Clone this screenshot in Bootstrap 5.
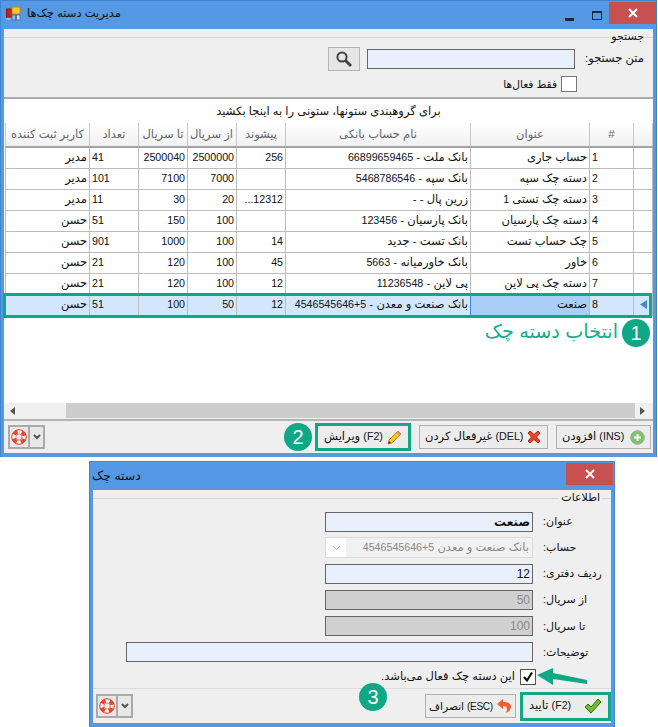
<!DOCTYPE html>
<html lang="fa" dir="rtl">
<head>
  <meta charset="UTF-8">
  <title>مدیریت دسته چک‌ها</title>
  <link href="https://cdn.jsdelivr.net/npm/bootstrap@5.3.0/dist/css/bootstrap.min.css" rel="stylesheet">
  <style>
    body { margin: 0; background: #fff; font-family: "Liberation Sans", "DejaVu Sans", sans-serif; font-size: 11.5px; line-height: 1.2; color: #111; }
    .shot { position: relative; width: 658px; height: 727px; overflow: hidden; }
    .lat { font-size: 10.67px; }
    .win { background: #5599e4; border: 1px solid #3f86d2; border-bottom-width: 0; }
    .win-main { width: 657px; height: 457px; margin: 0 1px 4px 0; }
    .win-dialog { width: 526px; height: 266px; margin: 0 43px 0 0; }
    .title-bar { height: 28px; flex: none; }
    .title-text { font-size: 11.5px; color: #111; gap: 6px; }
    .win-main .title-text { padding: 5px 0 0 5px; }
    .win-dialog .title-text { padding: 7px 0 0 2px; font-size: 12.5px; }
    .ctl-btn { width: 21px; height: 22px; margin: 3px 2px 0 0; }
    .ctl-min { width: 34px; margin-right: 0; }
    .close-btn { width: 47px; height: 22px; background: #c75050; margin-top: 1px; }
    .win-dialog .close-btn { margin-right: 1px; }
    .client { background: #efefef; margin: 0 3px 4px 3px; }
    .legend-row { height: 16px; }
    .legend-line { height: 1px; background: #d6d6d6; }
    .legend-edge { width: 7px; flex: none; }
    .legend-text { padding: 0 2px; font-size: 11px; }
    .win-dialog .legend-edge { width: 9px; }
    .search-panel { height: 68px; flex: none; }
    .search-row { margin-top: 2px; padding-right: 9px; gap: 9px; height: 24px; }
    .search-label { width: 60px; white-space: nowrap; }
    .win-input.form-control { width: 208px; height: 20px; min-height: 0; flex: none; padding: 0 2px; border: 1px solid #666; border-radius: 0; background: #e8f0fd; font-size: 12px; line-height: 18px; color: #111; text-align: right; box-shadow: none; }
    .win-input.is-off { background: #d0d0d0; color: #8a8a8a; }
    .win-input.is-wide { width: 407px; }
    .search-btn { width: 32px; height: 24px; margin-right: -2px; padding: 0; border: 1px solid #b4b4b4; border-radius: 0; background: #e6e6e6; }
    .active-row { margin: 5px 76px 0 0; gap: 4px; height: 16px; font-size: 10.67px; }
    .plain-check.form-check-input { width: 16px; height: 16px; margin: 0; float: none; flex: none; border: 1px solid #777; border-radius: 0; background-color: #fff; }
    .grid-area { flex: 1 1 auto; min-height: 0; background: #fff; border-top: 2px solid #aaa; position: relative; }
    .drop-hint { height: 24px; line-height: 24px; }
    .grid-table.table { width: 647px; margin: 0; table-layout: fixed; border-collapse: collapse; font-size: 11.5px; --bs-table-bg: #fff; }
    .grid-table th, .grid-table td { height: 21px; padding: 0 2px; border: 1px solid #bcbcbc; border-top: 0; vertical-align: middle; white-space: nowrap; overflow: hidden; color: #111; box-shadow: none; background: #fff; }
    .grid-table thead th { height: 24px; padding: 0 3px; font-weight: 400; color: #666; text-align: center; background: linear-gradient(#fff, #f0f0f0); border-top: 0; border-bottom: 2px solid #a4a4a4; border-left-color: #c8c8c8; border-right-color: #c8c8c8; }
    .grid-table .cell-l { text-align: left; font-size: 10.67px; }
    .grid-table .cell-r { text-align: right; }
    .grid-table .cell-n { text-align: right; font-size: 10.67px; }
    .col-ind { width: 19px; } .col-num { width: 44px; } .col-title { width: 119px; } .col-acc { width: 185px; }
    .col-s { width: 49px; } .col-user { width: 84px; }
    .grid-table .row-sel td { background: #d3e7fc; }
    .grid-table .row-sel .cell-cur { background: #a9cef8; border: 1px solid #3a88dc; }
    .scroll-bar { height: 15px; flex: none; background: #f0f0f0; direction: ltr; margin-bottom: 1px; }
    .scroll-thumb { background: #cdcdcd; height: 100%; width: 569px; margin-left: 53px; }
    .scroll-end { width: 9px; padding-left: 6px; flex: none; }
    .scroll-end2 { flex: none; padding-left: 5px; }
    .foot-bar { height: 34px; flex: none; border-top: 2px solid #b4b4b4; padding: 0 2px 0 4px; }
    .foot-bar.is-dialog { height: 35px; border-top: 1px solid #dcdcdc; padding: 0 0 0 3px; }
    .win-btn.btn { height: 24px; padding: 0 5px; border: 1px solid #b0b0b0; border-radius: 0; background: #ececec; color: #111; font-size: 11.5px; line-height: 1; white-space: nowrap; }
    .win-btn svg { flex: none; }
    .btn-ins.btn { width: 95px; } .btn-del.btn { width: 129px; }
    .btn-cancel.btn { width: 91px; padding: 0 3px; font-size: 10.67px; }
    .btn-cancel .lat { font-size: 10px; letter-spacing: -0.3px; }
    .win-btn.is-marked { width: 96px; height: 28px; border: 3px solid #0ea887; padding: 0 6px; }
    .is-dialog .win-btn.is-marked { width: 91px; height: 29px; }
    .help-group { height: 24px; border: 2px solid #aaa; background: #e8e8e8; }
    .help-main { width: 20px; border-right: 2px solid #aaa; }
    .help-drop { width: 13px; }
    .field-list { padding-right: 8px; gap: 5.2px; margin-top: 5px; }
    .field-row { gap: 10px; height: 21px; }
    .field-label { width: 60px; flex: none; text-align: left; white-space: nowrap; font-size: 11px; }
    .fake-select { width: 208px; height: 21px; flex: none; border: 1px solid #dcdcdc; background: #f1f1f1; color: #8a8a8a; }
    .fake-select span.sel-text { padding: 0 3px; white-space: nowrap; }
    .fake-select i { width: 20px; height: 100%; background: #fff; }
    .dialog-form { height: 198px; flex: none; }
    .active-line { margin: 6px 75px 0 0; gap: 5px; height: 16px; }
    .tick-box { width: 16px; height: 16px; flex: none; border: 1px solid #555; background: #fff; }
    .step-dot { position: absolute; width: 28px; height: 28px; border-radius: 50%; background: #0ea887; color: #fff; font-size: 20px; line-height: 28px; text-align: center; font-family: "Liberation Sans", sans-serif; }
    .row-mark { position: absolute; left: 3px; top: 293px; width: 649px; height: 25px; border: 3px solid #0ea887; }
    .pick-note { position: absolute; right: 40px; top: 317px; font-size: 19.2px; line-height: 30px; color: #14ae8c; white-space: nowrap; }
    .arrow-note { position: absolute; left: 537px; top: 668px; }
  </style>
</head>
<body>
<div class="shot">

  <!-- main window -->
  <div class="win win-main d-flex flex-column">
    <div class="title-bar d-flex justify-content-between align-items-start" dir="ltr">
      <div class="title-text d-flex align-items-center">
        <svg width="15" height="16" viewBox="0 0 15 16"><rect x="0.5" y="3" width="5" height="8" fill="#c8221c" stroke="#7a1b16"/><rect x="6" y="1" width="8" height="7" fill="#f5c92e" stroke="#b98a10"/><rect x="6" y="9" width="3.5" height="5" fill="#8fb7e6" stroke="#4a77ad"/><rect x="10.5" y="9" width="3.5" height="5" fill="#cfe0f4" stroke="#4a77ad"/><rect x="0.5" y="12" width="4" height="2" fill="#8fb7e6"/></svg>
        <span dir="rtl">مدیریت دسته چک‌ها</span>
      </div>
      <div class="d-flex align-items-start">
        <div class="ctl-btn ctl-min d-flex align-items-center justify-content-center"><svg width="9" height="14" viewBox="0 0 9 14"><rect y="10" width="9" height="3" fill="#1c2a3a"/></svg></div>
        <div class="ctl-btn d-flex align-items-center justify-content-center"><svg width="10" height="9" viewBox="0 0 10 9"><rect x="0.5" y="0.5" width="9" height="8" fill="none" stroke="#1c2a3a"/><rect width="10" height="2" fill="#1c2a3a"/></svg></div>
        <div class="close-btn d-flex align-items-center justify-content-center"><svg width="10" height="10" viewBox="0 0 10 10"><path d="M1 1l8 8M9 1l-8 8" stroke="#fff" stroke-width="2"/></svg></div>
      </div>
    </div>

    <div class="client flex-grow-1 d-flex flex-column">
      <div class="search-panel">
        <div class="legend-row d-flex align-items-center">
          <div class="legend-line legend-edge"></div>
          <div class="legend-text">جستجو</div>
          <div class="legend-line flex-grow-1"></div>
        </div>
        <div class="search-row d-flex align-items-center">
          <div class="search-label">متن جستجو:</div>
          <input class="form-control win-input" type="text">
          <button class="btn search-btn d-flex align-items-center justify-content-center" type="button">
            <svg width="18" height="18" viewBox="0 0 18 18"><circle cx="7" cy="7" r="4.6" fill="#e6e6e6" stroke="#444" stroke-width="2"/><path d="M10.5 10.5l5.5 5.5" stroke="#444" stroke-width="3"/></svg>
          </button>
        </div>
        <div class="active-row d-flex align-items-center">
          <input class="form-check-input plain-check" type="checkbox">
          <span>فقط فعال‌ها</span>
        </div>
      </div>

      <div class="grid-area">
        <div class="drop-hint text-center">برای گروهبندی ستونها، ستونی را به اینجا بکشید</div>
        <table class="table grid-table">
          <colgroup>
            <col class="col-ind"><col class="col-num"><col class="col-title"><col class="col-acc">
            <col class="col-s"><col class="col-s"><col class="col-s"><col class="col-s"><col class="col-user">
          </colgroup>
          <thead>
            <tr><th></th><th>#</th><th>عنوان</th><th>نام حساب بانکی</th><th>پیشوند</th><th>از سریال</th><th>تا سریال</th><th>تعداد</th><th>کاربر ثبت کننده</th></tr>
          </thead>
          <tbody>
            <tr><td></td><td class="cell-l">1</td><td class="cell-r">حساب جاری</td><td class="cell-r">بانک ملت - <span class="lat">66899659465</span></td><td class="cell-n">256</td><td class="cell-n">2500000</td><td class="cell-n">2500040</td><td class="cell-l">41</td><td class="cell-r">مدیر</td></tr>
            <tr><td></td><td class="cell-l">2</td><td class="cell-r">دسته چک سپه</td><td class="cell-r">بانک سپه - <span class="lat">5468786546</span></td><td class="cell-n"></td><td class="cell-n">7000</td><td class="cell-n">7100</td><td class="cell-l">101</td><td class="cell-r">مدیر</td></tr>
            <tr><td></td><td class="cell-l">3</td><td class="cell-r">دسته چک تستی <span class="lat">1</span></td><td class="cell-r">زرین پال - -</td><td class="cell-n">12312...</td><td class="cell-n">20</td><td class="cell-n">30</td><td class="cell-l">11</td><td class="cell-r">مدیر</td></tr>
            <tr><td></td><td class="cell-l">4</td><td class="cell-r">دسته چک پارسیان</td><td class="cell-r">بانک پارسیان - <span class="lat">123456</span></td><td class="cell-n"></td><td class="cell-n">100</td><td class="cell-n">150</td><td class="cell-l">51</td><td class="cell-r">حسن</td></tr>
            <tr><td></td><td class="cell-l">5</td><td class="cell-r">چک حساب تست</td><td class="cell-r">بانک تست - جدید</td><td class="cell-n">14</td><td class="cell-n">100</td><td class="cell-n">1000</td><td class="cell-l">901</td><td class="cell-r">حسن</td></tr>
            <tr><td></td><td class="cell-l">6</td><td class="cell-r">خاور</td><td class="cell-r">بانک خاورمیانه - <span class="lat">5663</span></td><td class="cell-n">45</td><td class="cell-n">100</td><td class="cell-n">120</td><td class="cell-l">21</td><td class="cell-r">حسن</td></tr>
            <tr><td></td><td class="cell-l">7</td><td class="cell-r">دسته چک پی لاین</td><td class="cell-r">پی لاین - <span class="lat">11236548</span></td><td class="cell-n">12</td><td class="cell-n">100</td><td class="cell-n">120</td><td class="cell-l">21</td><td class="cell-r">حسن</td></tr>
            <tr class="row-sel"><td class="text-center"><svg width="7" height="9" viewBox="0 0 7 9"><path d="M7 0v9L0 4.500z" fill="#4a86c8"/></svg></td><td class="cell-l">8</td><td class="cell-r cell-cur">صنعت</td><td class="cell-r">بانک صنعت و معدن - <span class="lat">5+4546545646</span></td><td class="cell-n">12</td><td class="cell-n">50</td><td class="cell-n">100</td><td class="cell-l">51</td><td class="cell-r">حسن</td></tr>
          </tbody>
        </table>
      </div>

      <div class="scroll-bar d-flex align-items-center">
        <div class="scroll-end"><svg class="d-block" width="5" height="8" viewBox="0 0 5 8"><path d="M5 0v8L0 4z" fill="#555"/></svg></div>
        <div class="scroll-thumb"></div>
        <div class="scroll-end2"><svg class="d-block" width="5" height="8" viewBox="0 0 5 8"><path d="M0 0v8l5-4z" fill="#555"/></svg></div>
      </div>

      <div class="foot-bar d-flex justify-content-between align-items-center">
        <div class="d-flex align-items-center">
          <button class="btn win-btn btn-ins d-flex align-items-center justify-content-between" type="button">
            <svg width="15" height="15" viewBox="0 0 15 15"><circle cx="7.500" cy="7.500" r="6.800" fill="#7cc46a" stroke="#9aa89a"/><path d="M7.500 4v7M4 7.500h7" stroke="#fff" stroke-width="2"/></svg>
            <span><span class="lat">(INS)</span> افزودن</span>
          </button>
          <button class="btn win-btn btn-del d-flex align-items-center justify-content-between ms-2 me-2" type="button">
            <svg width="16" height="16" viewBox="0 0 16 16"><path d="M2 4l2-2 4 3.500L12 2l2 2-3.500 4 3.500 4-2 2-4-3.500L4 14l-2-2 3.500-4z" fill="#e8452c" stroke="#a82a18" stroke-linejoin="round"/></svg>
            <span><span class="lat">(DEL)</span> غیرفعال کردن</span>
          </button>
          <button class="btn win-btn is-marked d-flex align-items-center justify-content-between" type="button">
            <svg width="15" height="15" viewBox="0 0 15 15"><path d="M11 1l3 3-9 9-4 1 1-4z" fill="#f3c338" stroke="#b98a10"/><path d="M11 1l3 3-1.500 1.500-3-3z" fill="#e88"/><path d="M1 14l1-3 2 2z" fill="#444"/></svg>
            <span><span class="lat">(F2)</span> ویرایش</span>
          </button>
        </div>
        <div class="help-group d-flex align-items-stretch" dir="ltr">
          <div class="help-main d-flex align-items-center justify-content-center">
            <svg width="16" height="16" viewBox="0 0 16 16"><circle cx="8" cy="8" r="5.500" fill="#fff"/><circle cx="8" cy="8" r="5.500" fill="none" stroke="#e8452c" stroke-width="4" stroke-dasharray="4.320 4.320" stroke-dashoffset="-2.160"/><circle cx="8" cy="8" r="7.300" fill="none" stroke="#e8452c"/><circle cx="8" cy="8" r="3.200" fill="#e8e8e8" stroke="#e8452c" stroke-width="0.700"/></svg>
          </div>
          <div class="help-drop d-flex align-items-center justify-content-center"><svg width="8" height="6" viewBox="0 0 8 6"><path d="M1 1l3 3 3-3" fill="none" stroke="#555" stroke-width="2"/></svg></div>
        </div>
      </div>
    </div>
  </div>

  <!-- dialog -->
  <div class="win win-dialog d-flex flex-column">
    <div class="title-bar d-flex justify-content-between align-items-start" dir="ltr">
      <div class="title-text"><span dir="rtl">دسته چک</span></div>
      <div class="close-btn d-flex align-items-center justify-content-center"><svg width="10" height="10" viewBox="0 0 10 10"><path d="M1 1l8 8M9 1l-8 8" stroke="#fff" stroke-width="2"/></svg></div>
    </div>
    <div class="client flex-grow-1 d-flex flex-column">
      <div class="dialog-form">
        <div class="legend-row d-flex align-items-center">
          <div class="legend-line legend-edge"></div>
          <div class="legend-text">اطلاعات</div>
          <div class="legend-line flex-grow-1"></div>
        </div>
        <div class="field-list d-flex flex-column">
          <div class="field-row d-flex align-items-center"><div class="field-label">عنوان:</div><input class="form-control win-input fw-bold" type="text" value="صنعت"></div>
          <div class="field-row d-flex align-items-center"><div class="field-label">حساب:</div>
            <div class="fake-select d-flex align-items-center justify-content-between">
              <span class="sel-text">بانک صنعت و معدن <span class="lat">5+4546545646</span></span>
              <i class="d-flex align-items-center justify-content-center"><svg width="9" height="6" viewBox="0 0 9 6"><path d="M1 1l3.500 3.500L8 1" fill="none" stroke="#aaa"/></svg></i>
            </div>
          </div>
          <div class="field-row d-flex align-items-center"><div class="field-label">ردیف دفتری:</div><input class="form-control win-input" type="text" value="12"></div>
          <div class="field-row d-flex align-items-center"><div class="field-label">از سریال:</div><input class="form-control win-input is-off" type="text" value="50" readonly></div>
          <div class="field-row d-flex align-items-center"><div class="field-label">تا سریال:</div><input class="form-control win-input is-off" type="text" value="100" readonly></div>
          <div class="field-row d-flex align-items-center"><div class="field-label">توضیحات:</div><input class="form-control win-input is-wide" type="text"></div>
        </div>
        <div class="active-line d-flex align-items-center">
          <div class="tick-box d-flex align-items-center justify-content-center"><svg width="12" height="12" viewBox="0 0 12 12"><path d="M2 6l3 3.500L10 1.500" fill="none" stroke="#111" stroke-width="2.200"/></svg></div>
          <span>این دسته چک فعال می‌باشد.</span>
        </div>
      </div>
      <div class="foot-bar is-dialog d-flex justify-content-between align-items-center">
        <div class="d-flex align-items-center gap-1">
          <button class="btn win-btn is-marked d-flex align-items-center justify-content-between" type="button">
            <svg width="18" height="16" viewBox="0 0 18 16"><path d="M1 9l3-3 3 3 7-8 3 3-10 11z" fill="#6cc02c" stroke="#2f6e12" stroke-linejoin="round"/></svg>
            <span><span class="lat">(F2)</span> تایید</span>
          </button>
          <button class="btn win-btn btn-cancel d-flex align-items-center justify-content-between" type="button">
            <svg width="16" height="16" viewBox="0 0 16 16"><path d="M7 1L1 6l6 5V8c3 0 4 1 4 3 0 1.500-.5 3-1.500 4C13 14 15 11.500 15 8.500 15 5.500 12 4 7 4z" fill="#ef5f33"/></svg>
            <span><span class="lat">(ESC)</span> انصراف</span>
          </button>
        </div>
        <div class="help-group d-flex align-items-stretch" dir="ltr">
          <div class="help-main d-flex align-items-center justify-content-center">
            <svg width="16" height="16" viewBox="0 0 16 16"><circle cx="8" cy="8" r="5.500" fill="#fff"/><circle cx="8" cy="8" r="5.500" fill="none" stroke="#e8452c" stroke-width="4" stroke-dasharray="4.320 4.320" stroke-dashoffset="-2.160"/><circle cx="8" cy="8" r="7.300" fill="none" stroke="#e8452c"/><circle cx="8" cy="8" r="3.200" fill="#e8e8e8" stroke="#e8452c" stroke-width="0.700"/></svg>
          </div>
          <div class="help-drop d-flex align-items-center justify-content-center"><svg width="8" height="6" viewBox="0 0 8 6"><path d="M1 1l3 3 3-3" fill="none" stroke="#555" stroke-width="2"/></svg></div>
        </div>
      </div>
    </div>
  </div>

  <!-- annotations drawn over the screenshot -->
  <div class="row-mark"></div>
  <div class="pick-note">انتخاب دسته چک</div>
  <div class="step-dot" style="left:622px;top:319px">1</div>
  <div class="step-dot" style="left:284px;top:423px">2</div>
  <div class="step-dot" style="left:359px;top:683px">3</div>
  <svg class="arrow-note" width="52" height="18" viewBox="0 0 52 18"><path d="M0 7L16 0v5l34 7v4L16 11v6z" fill="#0ea887"/></svg>
</div>

<script src="https://cdn.jsdelivr.net/npm/bootstrap@5.3.0/dist/js/bootstrap.bundle.min.js"></script>
</body>
</html>
